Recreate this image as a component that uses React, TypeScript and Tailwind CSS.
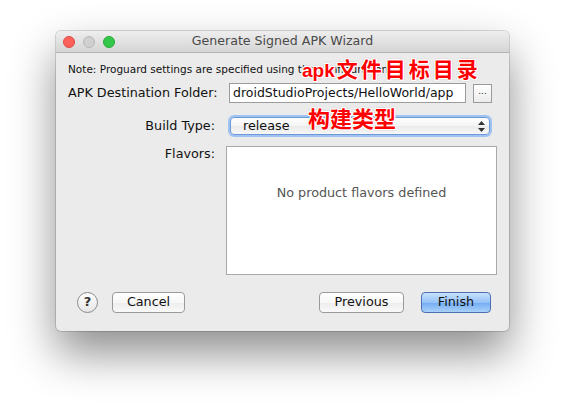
import React from 'react';

const outline =
    '[text-shadow:1px_0_0_#fff,-1px_0_0_#fff,0_1px_0_#fff,0_-1px_0_#fff,1px_1px_0_#fff,-1px_-1px_0_#fff,1px_-1px_0_#fff,-1px_1px_0_#fff,0_0_3px_rgba(0,0,0,0.35)]';

const TrafficLights: React.FC = () => (
    <div className="flex items-center gap-[8px]">
        <span className="h-[12px] w-[12px] rounded-full border border-[#de4a42] bg-[#fc605b]" />
        <span className="h-[12px] w-[12px] rounded-full border border-[#b8b8b8] bg-[#d0d0d0]" />
        <span className="h-[12px] w-[12px] rounded-full border border-[#25a838] bg-[#34c84a]" />
    </div>
);

const PushButton: React.FC<{ label: string; className?: string; primary?: boolean }> = ({
    label,
    className = '',
    primary = false,
}) => (
    <button
        className={`flex h-[21px] items-center justify-center rounded-[4px] border text-[12.75px] text-[#111] ${
            primary
                ? 'border-[#4c70b2] bg-[linear-gradient(#c8e1fc,#94c1f7_50%,#72abf3_51%,#a9d1fa)]'
                : 'border-[#9a9a9a] bg-[linear-gradient(#ffffff,#f7f7f7_50%,#ededed_51%,#f9f9f9)]'
        } ${className}`}
    >
        {label}
    </button>
);

export default function App() {
    return (
        <div className="min-h-[411px] w-[565px] bg-white pl-[56px] pt-[31px] font-['DejaVu_Sans',sans-serif] text-[12.75px] text-[#111]">
            <div className="relative flex h-[300px] w-[453px] flex-col rounded-[5px] bg-[#ebebeb] shadow-[0_0_0_1px_rgba(0,0,0,0.14),0_22px_45px_rgba(0,0,0,0.45)]">
                {/* Title bar */}
                <div className="grid h-[22px] grid-cols-[1fr_auto_1fr] items-center rounded-t-[5px] border-b border-[#b2b2b2] bg-[linear-gradient(#eeeeee,#d5d5d5)] px-[7px]">
                    <TrafficLights />
                    <span className="text-[12.6px] text-[#4a4a4a]">Generate Signed APK Wizard</span>
                    <span />
                </div>

                {/* Body */}
                <div className="flex flex-1 flex-col px-[12px]">
                    <div className="mt-[9px] h-[14px] w-[400px] overflow-hidden whitespace-nowrap text-[10.5px] leading-[14px]">
                        Note: Proguard settings are specified using the configuration
                    </div>

                    <div className="mt-[7px] flex h-[20px] items-center">
                        <span className="w-[147px] whitespace-nowrap">APK Destination Folder:</span>
                        <div className="ml-[14px] h-[20px] w-[237px] overflow-hidden whitespace-nowrap border border-[#9c9c9c] bg-white pl-[3px] text-[12.5px] leading-[18px]">
                            droidStudioProjects/HelloWorld/app
                        </div>
                        <button className="ml-[7px] flex h-[19px] w-[19px] items-center justify-center border border-[#9a9a9a] bg-[linear-gradient(#ffffff,#ececec)] pb-[3px] text-[9px] leading-none text-[#333]">
                            ...
                        </button>
                    </div>

                    <div className="mt-[12px] flex h-[22px] items-center">
                        <span className="w-[147px] text-right">Build Type:</span>
                        <div className="ml-[15px] flex h-[18px] w-[260px] items-center justify-between rounded-[4px] border border-[#6f98d6] bg-[linear-gradient(#ffffff,#f4f4f4_50%,#ebebeb_51%,#f7f7f7)] pl-[12px] pr-[4px] shadow-[0_0_0_2px_#9fc4f4]">
                            <span>release</span>
                            <svg width="7" height="11" viewBox="0 0 7 11">
                                <path d="M0 4 L3.5 0 L7 4 Z M0 7 L3.5 11 L7 7 Z" fill="#333" />
                            </svg>
                        </div>
                    </div>

                    <div className="mt-[9px] flex items-start">
                        <span className="w-[147px] text-right leading-[16px]">Flavors:</span>
                        <div className="ml-[11px] h-[129px] w-[271px] border border-[#a9a9a9] bg-white pt-[38px] text-center leading-[16px] text-[#555]">
                            No product flavors defined
                        </div>
                    </div>

                    <div className="mt-[16px] flex h-[22px] items-center">
                        <button className="ml-[9px] flex h-[21px] w-[21px] items-center justify-center rounded-full border border-[#8a8a8a] bg-[linear-gradient(#ffffff,#e6e6e6)] text-[13px] font-bold text-[#333]">
                            ?
                        </button>
                        <PushButton label="Cancel" className="ml-[14px] w-[73px]" />
                        <PushButton label="Previous" className="ml-auto w-[85px]" />
                        <PushButton label="Finish" primary className="ml-[17px] mr-[6px] w-[70px]" />
                    </div>
                </div>

                {/* Annotations */}
                <div
                    className={`absolute left-[246px] top-[28px] flex items-baseline whitespace-nowrap font-['Liberation_Sans','Noto_Sans_CJK_SC',sans-serif] font-bold leading-none text-[#ff0000] ${outline}`}
                >
                    <span className="text-[19px]">apk</span>
                    <span className="ml-[2px] text-[21px] tracking-[3px]">文件目标目录</span>
                </div>
                <div
                    className={`absolute left-[252px] top-[75px] whitespace-nowrap font-['Noto_Sans_CJK_SC',sans-serif] text-[22px] font-bold leading-none text-[#ff0000] ${outline}`}
                >
                    构建类型
                </div>
            </div>
        </div>
    );
}
